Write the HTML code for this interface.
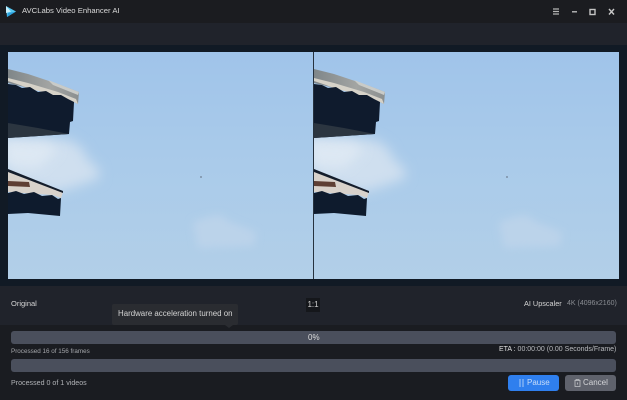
<!DOCTYPE html>
<html><head><meta charset="utf-8"><style>
html,body{margin:0;padding:0;background:#1b1d23}
#a{position:relative;width:627px;height:400px;overflow:hidden;background:#1b1d23;font-family:"Liberation Sans",sans-serif;filter:blur(.35px)}
#a div{position:absolute;box-sizing:border-box;white-space:nowrap}
.t{line-height:12px}
</style></head><body><div id="a">
<div style="left:0;top:0;width:627px;height:23px;background:#1b1c20"></div>
<div style="left:0;top:23px;width:627px;height:22px;background:#20232b"></div>
<div style="left:0;top:45px;width:627px;height:241px;background:#111a25"></div>
<div style="left:0;top:286px;width:627px;height:39px;background:#20232b"></div>
<div style="left:0;top:325px;width:627px;height:75px;background:#1a1c21"></div>

<svg style="position:absolute;left:0;top:0" width="627" height="400" viewBox="0 0 627 400">
<defs>
<linearGradient id="sky" x1="0" y1="0" x2="0" y2="1"><stop offset="0" stop-color="#a0c4ea"/><stop offset=".5" stop-color="#aacbea"/><stop offset="1" stop-color="#b2cfe8"/></linearGradient>
<linearGradient id="rf" x1="0" y1="0" x2="1" y2="0"><stop offset="0" stop-color="#7f8689"/><stop offset=".6" stop-color="#a3a5a3"/><stop offset="1" stop-color="#8b8f8f"/></linearGradient>
<filter id="b6" x="-40%" y="-40%" width="180%" height="180%"><feGaussianBlur stdDeviation="6"/></filter>
<filter id="b3" x="-40%" y="-40%" width="180%" height="180%"><feGaussianBlur stdDeviation="4"/></filter>
<clipPath id="c"><rect x="0" y="52" width="305" height="227"/></clipPath>
<g id="scene" clip-path="url(#c)">
<rect x="0" y="52" width="305" height="227" fill="url(#sky)"/>
<path d="M-10 136 L35 138 L62 140 L74 148 L80 160 L90 168 L92 178 L70 186 L50 192 L0 180Z" fill="#cfdfef" filter="url(#b6)"/>
<path d="M-5 140 L40 142 L50 150 L30 168 L-5 166Z" fill="#e3ecf5" filter="url(#b6)" opacity=".7"/>
<path d="M185 222 L200 217 L212 215 L222 222 L248 232 L246 246 L190 248Z" fill="#bbd3ea" filter="url(#b3)"/>
<circle cx="193" cy="177" r="1" fill="#7d90a5"/>
<path d="M0 69 L20 74 L50 84 L71 92 L70 104 L50 95 L0 83Z" fill="url(#rf)"/>
<path d="M40 80 L71 92 L70 95 L45 85Z" fill="#c9cbc8"/>
<path d="M0 81 L12 85 L22 89 L35 92 L45 96 L55 97 L70 104 L68 99 L50 92 L20 83 L0 78Z" fill="#d6d2c8"/>
<path d="M0 84 L8 85 L14 88 L22 87 L30 92 L38 91 L45 95 L53 95 L60 99 L66 102 L65 121 L62 122 L61 134 L0 138Z" fill="#0f1b2d"/>
<path d="M0 123 L30 128 L61 134 L0 138Z" fill="#2b3540"/>
<path d="M0 170 L55 192 L53 198 L45 195 L0 192Z" fill="#d8d2cb"/>
<path d="M0 169 L55 191 L55 193 L0 172Z" fill="#141d2b"/>
<path d="M0 181 L21 182 L22 187 L0 186Z" fill="#5e3f34"/>
<path d="M0 193 L8 191 L16 194 L26 192 L34 196 L44 195 L50 199 L53 198 L52 216 L20 213 L0 214Z" fill="#0e1b2d"/>
</g>
</defs>
<use href="#scene" x="8"/>
<use href="#scene" x="314"/>
<rect x="313" y="52" width="1" height="227" fill="#26323f"/>
<path d="M6 6 L16 11.500 L7 17 Z" fill="#55c8f2"/>
<path d="M6 6 L11 11.500 L6 13 Z" fill="#c9f0fb"/>
<path d="M7 17 L16 11.500 L8 13 Z" fill="#2b9fdc"/>
<path d="M553 9h6M553 11.500h6M553 14h6" stroke="#b4b4b4" stroke-width="1.300" fill="none"/>
<path d="M572 11.800h5" stroke="#c4c4c4" stroke-width="1.300"/>
<rect x="590" y="9.500" width="5" height="5" fill="none" stroke="#c4c4c4" stroke-width="1.400"/>
<path d="M609 9l5 5.500M614 9l-5 5.500" stroke="#c8c8c8" stroke-width="1.400"/>
</svg>

<div class="t" style="left:22px;top:5px;font-size:7.700px;color:#d8d8d8">AVCLabs Video Enhancer AI</div>
<div class="t" style="left:11px;top:298px;font-size:7.500px;color:#d5d5d5">Original</div>
<div class="t" style="left:306px;top:298px;width:14px;height:14px;background:#15171b;font-size:8px;color:#cfcfcf;text-align:center;line-height:14px">1:1</div>
<div class="t" style="left:524px;top:298px;font-size:7.300px;color:#d5d5d5">AI Upscaler</div>
<div class="t" style="left:567px;top:298px;font-size:7px;color:#8a8d93">4K (4096x2160)</div>

<div style="left:11px;top:331px;width:605px;height:13px;background:#4a4f5c;border-radius:3px"></div>
<div style="left:11px;top:359px;width:605px;height:13px;background:#4a4f5c;border-radius:3px"></div>
<div class="t" style="left:308px;top:332px;font-size:8px;color:#dcdcdc">0%</div>

<div style="left:112px;top:304px;width:126px;height:21px;background:#2a2c31;border-radius:2px"></div>
<svg style="position:absolute;left:225px;top:325px" width="10" height="4"><path d="M0 0h8L4 3z" fill="#2a2c31"/></svg>
<div class="t" style="left:118px;top:308px;font-size:7.900px;color:#d4d4d4">Hardware acceleration turned on</div>

<div class="t" style="left:11px;top:346px;font-size:6.300px;color:#a4a6aa">Processed 16 of 156 frames</div>
<div class="t" style="left:499px;top:344px;font-size:7px;color:#b9bbbf"><span style="color:#e0e0e0">ETA :</span> 00:00:00 (0.00 Seconds/Frame)</div>
<div class="t" style="left:11px;top:377px;font-size:7.100px;color:#b0b2b6">Processed 0 of 1 videos</div>

<div style="left:508px;top:375px;width:51px;height:16px;background:#2f7fee;border-radius:3px"></div>
<div class="t" style="left:527px;top:377px;font-size:8px;color:#c9defa">Pause</div>
<svg style="position:absolute;left:519px;top:379px" width="6" height="8"><path d="M1 0v8M4 0v8" stroke="#a9cbf7" stroke-width="1"/></svg>
<div style="left:565px;top:375px;width:51px;height:16px;background:#5f626c;border-radius:3px"></div>
<div class="t" style="left:583px;top:377px;font-size:8px;color:#d4d5d8">Cancel</div>
<svg style="position:absolute;left:574px;top:379px" width="7" height="8"><path d="M.5 1.500h6M2 1.500v-1h3v1M1 1.500h5v6H1zM3.500 3.500v2" fill="none" stroke="#c4c5c9" stroke-width=".8"/></svg>
</div></body></html>
